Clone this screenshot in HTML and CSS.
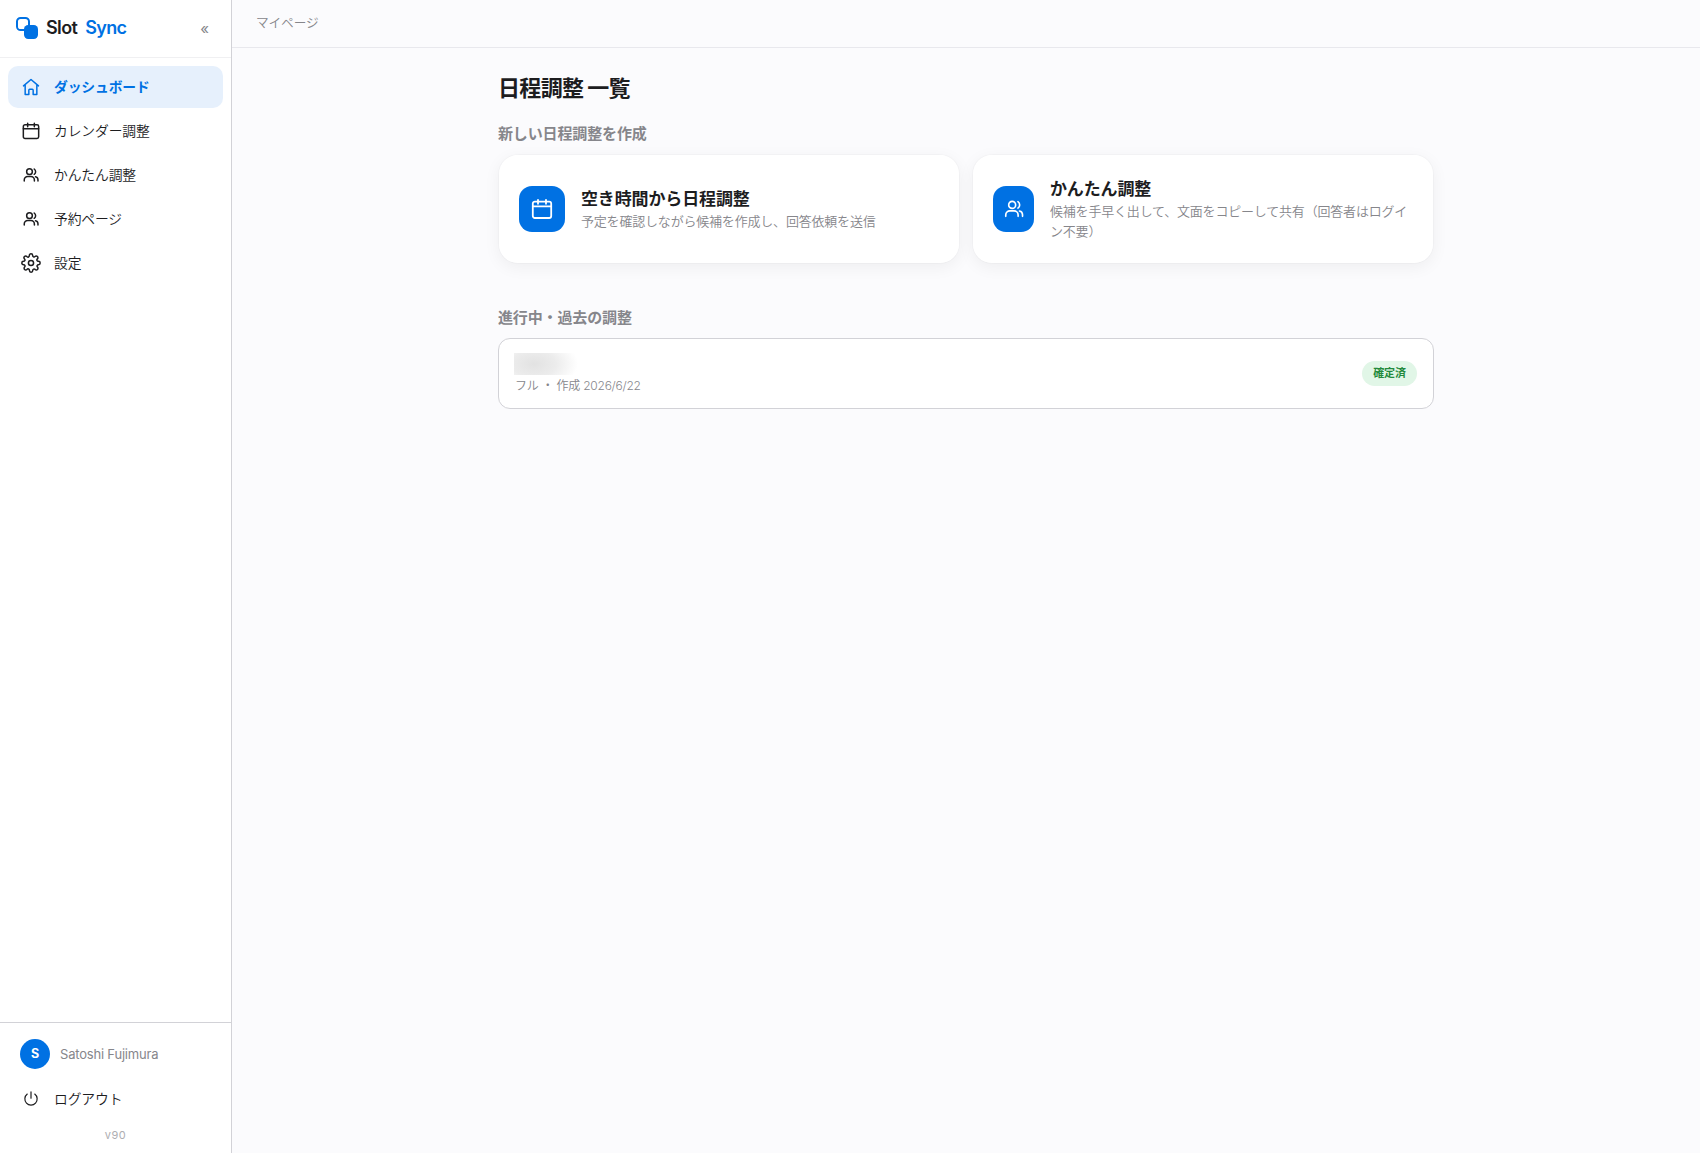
FILE: index.html
```html
<!DOCTYPE html>
<html lang="ja">
<head>
  <meta charset="UTF-8" />
  <meta name="viewport" content="width=device-width, initial-scale=1.0"/>
  <title>Slot Sync</title>
  <link rel="stylesheet" href="styles.css">
</head>
<body>
  <!-- Shared icons -->
  <svg class="sprite">
    <symbol id="i-calendar" viewBox="0 0 24 24"><rect x="2.800" y="4.600" width="18.400" height="16.400" rx="2"/><path d="M2.800 9.400h18.400M8 2.800v4M16 2.800v4"/></symbol>
    <symbol id="i-users" viewBox="0 0 24 24"><circle cx="10" cy="7.500" r="3.800"/><path d="M3 20v-1.500a4.500 4.500 0 0 1 4.500-4.500h4.500a4.500 4.500 0 0 1 4.500 4.500V20M16.300 4a4.200 4.200 0 0 1 0 7M18 14.200a4.300 4.300 0 0 1 3.300 4.200V20"/></symbol>
  </svg>

  <div class="app">
    <aside class="sidebar">
      <div class="brand">
        <svg class="logo" viewBox="0 0 22 22"><rect x="1" y="1" width="12" height="12" rx="3.6" fill="#fff" stroke="#0071e3" stroke-width="2"/><rect x="8" y="8" width="14" height="14" rx="4.2" fill="#0071e3"/></svg>
        <span class="brand-name">Slot <b>Sync</b></span>
        <button class="collapse">«</button>
      </div>

      <nav class="nav">
        <a class="nav-item active"><svg class="icon" viewBox="0 0 24 24"><path d="M3 10.600 12 3l9 7.600M5 9.200V21h4.400v-5.200a1 1 0 0 1 1-1h3.200a1 1 0 0 1 1 1V21H19V9.200"/></svg><span>ダッシュボード</span></a>
        <a class="nav-item"><svg class="icon"><use href="#i-calendar"/></svg><span>カレンダー調整</span></a>
        <a class="nav-item"><svg class="icon small"><use href="#i-users"/></svg><span>かんたん調整</span></a>
        <a class="nav-item"><svg class="icon small"><use href="#i-users"/></svg><span>予約ページ</span></a>
        <a class="nav-item"><svg class="icon" viewBox="0 0 24 24"><circle cx="12" cy="12" r="3.100"/><path d="M19.400 15a1.650 1.650 0 0 0 .33 1.820l.06.06a2 2 0 1 1-2.830 2.830l-.06-.06a1.650 1.650 0 0 0-2.800 1.170V21a2 2 0 0 1-4 0v-.09a1.650 1.650 0 0 0-2.900-1.260l-.06.06a2 2 0 1 1-2.830-2.830l.06-.06A1.650 1.650 0 0 0 3.090 14H3a2 2 0 0 1 0-4h.09A1.650 1.650 0 0 0 4.270 7.180l-.06-.06a2 2 0 1 1 2.830-2.830l.06.06A1.650 1.650 0 0 0 10 3.090V3a2 2 0 0 1 4 0v.09a1.650 1.650 0 0 0 2.820 1.180l.06-.06a2 2 0 1 1 2.830 2.830l-.06.06A1.650 1.650 0 0 0 20.910 10H21a2 2 0 0 1 0 4h-.09a1.650 1.650 0 0 0-1.510 1z"/></svg><span>設定</span></a>
      </nav>

      <div class="side-foot">
        <div class="user">
          <span class="avatar">S</span>
          <span>Satoshi Fujimura</span>
        </div>
        <a class="nav-item"><svg class="icon small thin" viewBox="0 0 24 24"><path d="M12 2.500v8.500M7 5.400a8.200 8.200 0 1 0 10 0"/></svg><span>ログアウト</span></a>
        <div class="version">v90</div>
      </div>
    </aside>

    <main class="main">
      <header class="topbar">マイページ</header>

      <div class="content">
        <h1>日程調整 一覧</h1>

        <h2>新しい日程調整を作成</h2>
        <div class="create-grid">
          <a class="create-card">
            <span class="card-icon"><svg class="icon"><use href="#i-calendar"/></svg></span>
            <div>
              <div class="card-title">空き時間から日程調整</div>
              <div class="card-desc">予定を確認しながら候補を作成し、回答依頼を送信</div>
            </div>
          </a>
          <a class="create-card">
            <span class="card-icon narrow"><svg class="icon"><use href="#i-users"/></svg></span>
            <div>
              <div class="card-title">かんたん調整</div>
              <div class="card-desc">候補を手早く出して、文面をコピーして共有（回答者はログイン不要）</div>
            </div>
          </a>
        </div>

        <h2>進行中・過去の調整</h2>
        <div class="event">
          <div>
            <div class="masked"></div>
            <div class="event-meta">フル ・ 作成 2026/6/22</div>
          </div>
          <span class="badge">確定済</span>
        </div>
      </div>
    </main>
  </div>
</body>
</html>
```
FILE: styles.css
```css
* {
  box-sizing: border-box;
}

body {
  margin: 0;
  font-family: Inter, "Noto Sans CJK JP", sans-serif;
  font-size: 14px;
  letter-spacing: -0.01em;
  color: #1d1d1f;
  background: #fbfbfd;
}

.sprite {
  display: none;
}

.app {
  display: flex;
  height: 100vh;
}

.icon {
  width: 20px;
  height: 20px;
  flex-shrink: 0;
  fill: none;
  stroke: currentColor;
  stroke-width: 1.8;
  stroke-linecap: round;
  stroke-linejoin: round;
}

/* Sidebar */
.sidebar {
  width: 232px;
  flex-shrink: 0;
  display: flex;
  flex-direction: column;
  background: #fff;
  border-right: 1px solid #d2d2d7;
}

.brand {
  display: flex;
  align-items: center;
  height: 58px;
  padding: 0 19px 2px 16px;
  border-bottom: 1px solid #f0f0f2;
}

.logo {
  width: 22px;
  height: 22px;
}

.brand-name {
  margin-left: 8px;
  font-size: 18px;
  font-weight: 600;
  letter-spacing: -0.035em;
  word-spacing: 4px;
}

.brand-name b {
  font-weight: 600;
  color: #0071e3;
}

.collapse {
  margin-left: auto;
  padding: 2px 3px 0;
  border: none;
  background: none;
  font-family: inherit;
  font-size: 15px;
  color: #86868b;
}

.nav {
  display: flex;
  flex-direction: column;
  gap: 2px;
  padding: 8px;
}

.nav-item {
  display: flex;
  align-items: center;
  gap: 13px;
  height: 42px;
  padding: 0 13px;
  border-radius: 10px;
  font-size: 13.8px;
  font-weight: 350;
}

.nav-item span {
  padding-bottom: 3px;
}

.nav-item.active {
  background: #e6f0fc;
  color: #0071e3;
  font-weight: 600;
}

.icon.small {
  width: 18px;
  height: 18px;
  margin: 0 1px;
  stroke-width: 2;
}

.icon.thin {
  stroke-width: 1.6;
}

.side-foot {
  margin-top: auto;
  padding: 8px 8px 9px;
  border-top: 1px solid #d2d2d7;
}

.user {
  display: flex;
  align-items: center;
  gap: 10px;
  padding: 8px 12px;
  margin-bottom: 1px;
  font-size: 13px;
  letter-spacing: -0.015em;
  color: #86868b;
}

.avatar {
  width: 30px;
  height: 30px;
  border-radius: 50%;
  background: #0071e3;
  color: #fff;
  font-size: 12.5px;
  font-weight: 700;
  line-height: 30px;
  text-align: center;
}

.version {
  margin-top: 6px;
  font-size: 11px;
  line-height: 18px;
  letter-spacing: 0.04em;
  text-align: center;
  color: #aeaeb2;
}

/* Main area */
.main {
  flex: 1;
}

.topbar {
  height: 48px;
  padding: 0 24px;
  border-bottom: 1px solid #e8e8ed;
  font-size: 12.7px;
  font-weight: 350;
  line-height: 46px;
  color: #86868b;
}

.content {
  width: 936px;
  margin: 0 auto;
  padding-top: 24px;
}

h1 {
  margin: 0 0 15px;
  font-size: 22px;
  font-weight: 600;
  line-height: 33px;
  letter-spacing: -0.03em;
  word-spacing: -1px;
}

h2 {
  margin: 0 0 7px;
  font-size: 15px;
  font-weight: 600;
  line-height: 27px;
  color: #86868b;
}

.create-grid {
  display: grid;
  grid-template-columns: 1fr 1fr;
  gap: 12px;
  margin-bottom: 40px;
}

.create-card {
  display: flex;
  align-items: center;
  gap: 16px;
  height: 110px;
  padding: 0 20px;
  background: #fff;
  background-clip: padding-box;
  border: 1px solid rgba(0, 0, 0, 0.02);
  border-radius: 20px;
  box-shadow: 0 4px 16px rgba(0, 0, 0, 0.05);
}

.card-icon {
  display: flex;
  align-items: center;
  justify-content: center;
  flex-shrink: 0;
  width: 46px;
  height: 46px;
  border-radius: 13px;
  background: #0071e3;
  color: #fff;
}

.card-icon.narrow {
  width: 41px;
}

.card-icon .icon {
  width: 24px;
  height: 24px;
}

.card-icon.narrow .icon {
  width: 22px;
  height: 22px;
}

.card-title {
  padding-top: 1px;
  font-size: 17px;
  font-weight: 600;
  line-height: 23px;
}

.card-desc {
  font-size: 13px;
  font-weight: 350;
  line-height: 20px;
  letter-spacing: -0.015em;
  color: #86868b;
}

.event {
  display: flex;
  align-items: center;
  justify-content: space-between;
  height: 71px;
  padding: 0 16px 0 15px;
  background: #fff;
  border: 1px solid #d2d2d7;
  border-radius: 12px;
}

.masked {
  width: 64px;
  height: 22px;
  background: radial-gradient(ellipse 44px 26px at 20px 11px, #e2e2e2 0, #ececec 50%, #fff 100%);
}

.event-meta {
  padding: 1px 0 0 1px;
  font-size: 12px;
  font-weight: 350;
  line-height: 19px;
  letter-spacing: -0.02em;
  color: #86868b;
}

.badge {
  width: 55px;
  border-radius: 13px;
  background: #e1f6e7;
  color: #248a3d;
  font-size: 11px;
  font-weight: 700;
  line-height: 25px;
  text-align: center;
}
```
